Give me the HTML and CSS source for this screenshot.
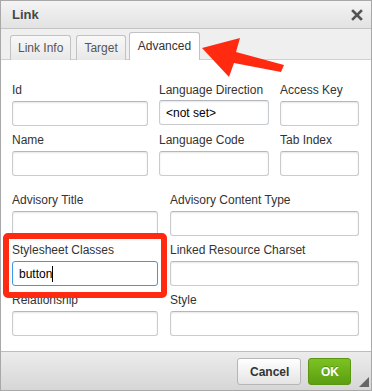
FILE: index.html
```html
<!DOCTYPE html>
<html lang="en">

<head>
    <meta charset="UTF-8" />
    <meta name="viewport" content="width=device-width, initial-scale=1.0" />
    <title>Link</title>
    <link rel="stylesheet" href="styles.css">
</head>

<body>
    <div class="dialog">
        <div class="dialog-title">
            <span>Link</span>
            <svg class="close" width="12" height="12" viewBox="0 0 12 12">
                <path d="M2 2 L10 10 M10 2 L2 10" />
            </svg>
        </div>

        <div class="dialog-tabs">
            <a class="tab">Link Info</a>
            <a class="tab">Target</a>
            <a class="tab active">Advanced</a>
        </div>

        <div class="dialog-body">
            <div class="field-group three">
                <div class="field">
                    <label>Id</label>
                    <input type="text" />
                </div>
                <div class="field">
                    <label>Language Direction</label>
                    <select>
                        <option>&lt;not set&gt;</option>
                    </select>
                </div>
                <div class="field">
                    <label>Access Key</label>
                    <input type="text" />
                </div>
                <div class="field">
                    <label>Name</label>
                    <input type="text" />
                </div>
                <div class="field">
                    <label>Language Code</label>
                    <input type="text" />
                </div>
                <div class="field">
                    <label>Tab Index</label>
                    <input type="text" />
                </div>
            </div>

            <div class="field-group two">
                <div class="field">
                    <label>Advisory Title</label>
                    <input type="text" />
                </div>
                <div class="field">
                    <label>Advisory Content Type</label>
                    <input type="text" />
                </div>
                <div class="field">
                    <label>Stylesheet Classes</label>
                    <span class="input-wrap">
                        <input type="text" class="focused" value="button" />
                        <span class="caret"></span>
                    </span>
                </div>
                <div class="field">
                    <label>Linked Resource Charset</label>
                    <input type="text" />
                </div>
                <div class="field">
                    <label>Relationship</label>
                    <input type="text" />
                </div>
                <div class="field">
                    <label>Style</label>
                    <input type="text" />
                </div>
            </div>
        </div>

        <div class="dialog-footer">
            <button class="btn">Cancel</button>
            <button class="btn btn-ok">OK</button>
            <span class="grip"></span>
        </div>

        <!-- annotations -->
        <div class="callout-box"></div>
        <svg class="callout-arrow" width="95" height="50" viewBox="195 30 95 50">
            <polygon points="202,48 240,38 236,52 284,65 281,72 234,63 229,77" />
        </svg>
    </div>
</body>

</html>
```

FILE: styles.css
```css
* {
    box-sizing: border-box;
}

body {
    margin: 0;
    font-family: "Liberation Sans", Arial, sans-serif;
    font-size: 12px;
    color: #333;
    background: #fff;
}

.dialog {
    width: 372px;
    height: 391px;
    border: 1px solid #a8a8a8;
    position: relative;
    display: flex;
    flex-direction: column;
    background: #fff;
}

.dialog-title {
    height: 28px;
    padding: 0 8px 0 11px;
    display: flex;
    align-items: center;
    justify-content: space-between;
    background: linear-gradient(#f4f4f4, #e2e2e2);
    border-bottom: 1px solid #c4c4c4;
    font-size: 13px;
    font-weight: bold;
    color: #474747;
}

.dialog-title .close {
    margin-top: 1px;
}

.dialog-title .close path {
    stroke: #555;
    stroke-width: 2.6;
    stroke-linecap: square;
    fill: none;
}

.dialog-tabs {
    height: 31px;
    padding: 0 0 0 9px;
    display: flex;
    align-items: flex-end;
    background: #efefef;
    border-bottom: 1px solid #cfcfcf;
}

.tab {
    height: 25px;
    margin-right: 5px;
    margin-bottom: -1px;
    padding: 0 7px;
    display: flex;
    align-items: center;
    border: 1px solid #c2c2c2;
    border-bottom: none;
    border-radius: 3px 3px 0 0;
    background: linear-gradient(#f8f8f8, #e8e8e8);
    color: #555;
}

.tab.active {
    height: 28px;
    margin-left: -2px;
    padding: 0 8px 2px;
    background: #fff;
    color: #333;
}

.dialog-body {
    flex: 1;
    padding: 22px 11px 0 11px;
}

.field-group {
    display: grid;
    row-gap: 6px;
}

.field-group.three {
    grid-template-columns: 136px 110px 79px;
    column-gap: 11px;
}

.field-group.two {
    grid-template-columns: 146px 189px;
    column-gap: 12px;
    margin-top: 16px;
}

.field {
    display: flex;
    flex-direction: column;
}

.field label {
    line-height: 16px;
    margin-bottom: 3px;
    white-space: nowrap;
}

.field input,
.field select {
    width: 100%;
    height: 25px;
    margin: 0;
    padding: 0 6px;
    border: 1px solid #c9cccf;
    border-top-color: #b4b8bc;
    border-radius: 3px;
    box-shadow: inset 0 1px 2px rgba(0, 0, 0, 0.1);
    background: #fff;
    font-family: inherit;
    font-size: 12px;
    color: #000;
    outline: none;
}

.field select {
    appearance: none;
    margin-top: -1px;
    margin-bottom: 1px;
}

.field input.focused {
    border-color: #3c98e4;
    box-shadow: none;
}

.input-wrap {
    position: relative;
    display: block;
}

.caret {
    position: absolute;
    left: 40px;
    top: 5px;
    width: 1px;
    height: 16px;
    background: #000;
}

.dialog-footer {
    height: 39px;
    padding: 6px 20px 0 0;
    display: flex;
    justify-content: flex-end;
    align-items: flex-start;
    gap: 7px;
    border-top: 1px solid #bdbdbd;
    background: linear-gradient(#ececec, #d6d6d6);
    position: relative;
}

.btn {
    height: 27px;
    padding: 0 12px;
    border: 1px solid #b6b6b6;
    border-radius: 3px;
    background: linear-gradient(#fff, #e4e4e4);
    font-family: inherit;
    font-size: 12px;
    font-weight: bold;
    color: #333;
    cursor: pointer;
}

.btn:first-child {
    width: 64px;
}

.btn-ok {
    width: 43px;
    border-color: #5b9611;
    background: linear-gradient(#7cc223, #5c9e10);
    color: #fff;
    text-shadow: 0 -1px 0 rgba(0, 0, 0, 0.25);
}

.grip {
    position: absolute;
    right: 2px;
    bottom: 3px;
    width: 0;
    height: 0;
    border-left: 10px solid transparent;
    border-bottom: 10px solid #666;
}

.callout-box {
    position: absolute;
    left: 2px;
    top: 232px;
    width: 164px;
    height: 65px;
    border: 6px solid #ff2a10;
    border-radius: 5px;
}

.callout-arrow {
    position: absolute;
    left: 194px;
    top: 29px;
}

.callout-arrow polygon {
    fill: #ff2a10;
}
```
